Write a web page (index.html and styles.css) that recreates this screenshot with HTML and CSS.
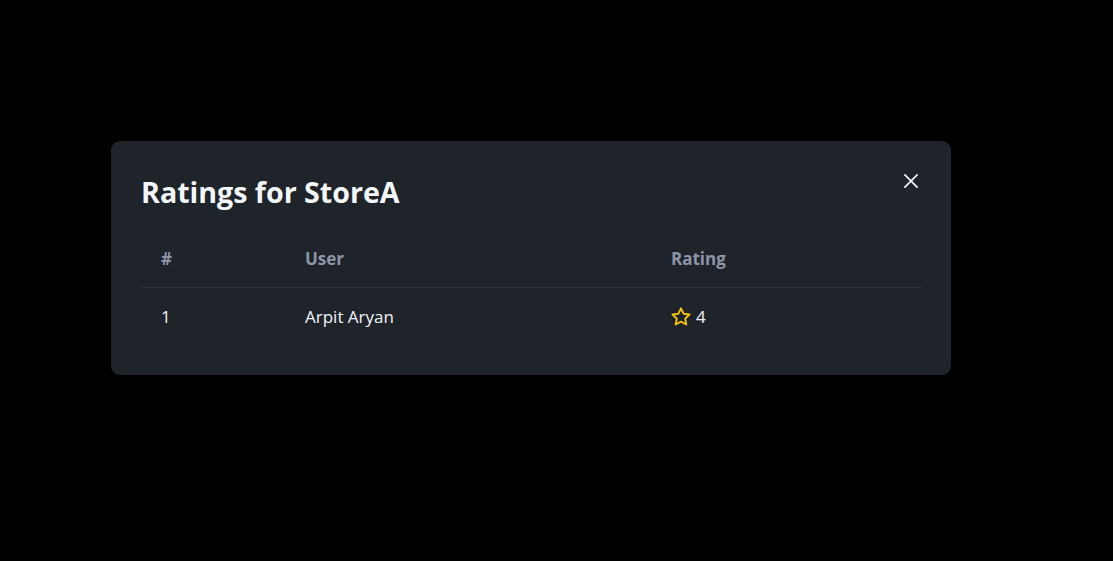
FILE: index.html
```html
<!DOCTYPE html>
<html lang="en">
<head>
<meta charset="utf-8">
<title>Ratings for StoreA</title>
<link rel="stylesheet" href="styles.css">
</head>
<body>
<div class="backdrop">
  <div class="modal">
    <button class="close" aria-label="Close">
      <svg width="14" height="14" viewBox="0 0 14 14" fill="none" stroke="currentColor" stroke-width="1.7" stroke-linecap="round"><path d="M0.9 0.9 L13.1 13.1 M13.1 0.9 L0.9 13.1"/></svg>
    </button>
    <h2 class="title">Ratings for StoreA</h2>
    <table class="ratings">
      <colgroup><col class="c-num"><col class="c-user"><col class="c-rating"></colgroup>
      <thead>
        <tr><th>#</th><th>User</th><th>Rating</th></tr>
      </thead>
      <tbody>
        <tr>
          <td>1</td>
          <td>Arpit Aryan</td>
          <td><div class="rating"><svg class="star" width="20" height="20" viewBox="0 0 20 20" fill="none" stroke="#f5c211" stroke-width="1.9" stroke-linejoin="round"><path d="M10 1.3l2.6 5.4 5.9.8-4.3 4.1 1.1 5.9L10 14.7l-5.3 2.8 1.1-5.9-4.3-4.1 5.9-.8z"/></svg><span>4</span></div></td>
        </tr>
      </tbody>
    </table>
  </div>
</div>
</body>
</html>
```
FILE: styles.css
```css
html, body {
  margin: 0;
  background: #000;
  font-family: "Open Sans", "Noto Sans", sans-serif;
  color: #eef2f6;
}
.backdrop {
  padding: 141px 0 0 111px;
}
.modal {
  position: relative;
  box-sizing: border-box;
  width: 840px;
  background: #1f232a;
  border-radius: 9px;
  padding: 30px;
}
.close {
  position: absolute;
  top: 33px;
  right: 33px;
  background: none;
  border: 0;
  padding: 0;
  color: #f2f5f8;
  display: flex;
  cursor: pointer;
}
.title {
  margin: 0 0 16px 0;
  font-size: 28.6px;
  font-weight: 700;
  line-height: 42px;
  color: #f4f7fa;
}
.ratings {
  width: 100%;
  border-collapse: collapse;
  font-size: 17px;
}
.c-num { width: 144px; }
.c-user { width: 366px; }
.ratings th {
  text-align: left;
  font-weight: 700;
  color: #8c96a6;
  padding: 18px 20px 16px;
  line-height: 24px;
  border-bottom: 1px solid #2d323a;
}
.ratings td {
  padding: 17px 20px 16px;
  line-height: 24px;
  color: #f2f5f8;
}
.rating {
  display: flex;
  align-items: center;
  gap: 5px;
  height: 24px;
}
.star { display: block; }
```
